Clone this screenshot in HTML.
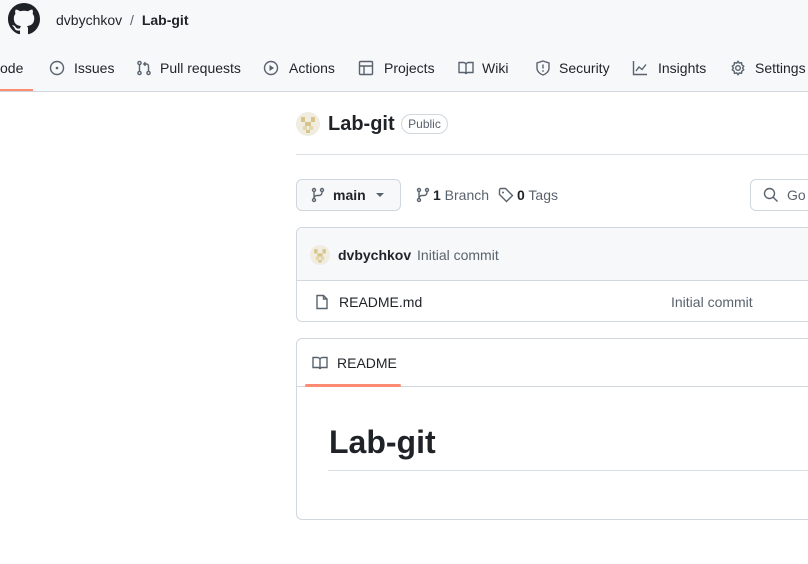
<!DOCTYPE html>
<html><head><meta charset="utf-8"><style>
*{margin:0;padding:0;box-sizing:border-box}
body{width:808px;height:564px;overflow:hidden;background:#fff;font-family:"Liberation Sans",sans-serif;color:#1f2328;position:relative}
.a{position:absolute}
.hdr{left:0;top:0;width:808px;height:92px;background:#f6f8fa;border-bottom:1px solid #d0d7de}
.nav{top:59px;font-size:14px;color:#1f2328;line-height:18px;white-space:nowrap}
svg{display:block}
.ic{stroke:#59636e;fill:none;stroke-width:1.4}
</style></head><body>
<div class="a hdr"></div>
<svg class="a" style="left:8px;top:3px" width="32" height="32" viewBox="0 0 16 16"><path fill="#1f2328" d="M8 0C3.58 0 0 3.58 0 8c0 3.54 2.29 6.53 5.47 7.59.4.07.55-.17.55-.38 0-.19-.01-.82-.01-1.49-2.01.37-2.53-.49-2.69-.94-.09-.23-.48-.94-.82-1.13-.28-.15-.68-.52-.01-.53.63-.01 1.08.58 1.23.82.72 1.21 1.87.87 2.33.66.07-.52.28-.87.51-1.07-1.78-.2-3.64-.89-3.64-3.95 0-.87.31-1.59.82-2.15-.08-.2-.36-1.02.08-2.12 0 0 .67-.21 2.2.82.64-.18 1.32-.27 2-.27.68 0 1.36.09 2 .27 1.53-1.04 2.2-.82 2.2-.82.44 1.1.16 1.92.08 2.12.51.56.82 1.27.82 2.15 0 3.07-1.87 3.75-3.65 3.95.29.25.54.73.54 1.48 0 1.07-.01 1.93-.01 2.2 0 .21.15.46.55.38A8.013 8.013 0 0016 8c0-4.42-3.58-8-8-8z"/></svg>
<div class="a" style="left:56px;top:11px;font-size:14px;line-height:18px;color:#1f2328">dvbychkov <span style="color:#59636e;margin:0 4px">/</span> <b>Lab-git</b></div>

<div class="a nav" style="left:0">ode</div>
<div class="a" style="left:0;top:89px;width:33px;height:2px;background:#fd8c73"></div>
<svg class="a" style="left:49px;top:60px" width="16" height="16"><circle class="ic" cx="8" cy="8" r="6.5"/><circle cx="8" cy="8" r="1.3" fill="#59636e"/></svg>
<div class="a nav" style="left:74px">Issues</div>
<svg class="a" style="left:136px;top:60px" width="16" height="16"><circle class="ic" cx="3.5" cy="3" r="1.6"/><circle class="ic" cx="3.5" cy="13" r="1.6"/><path class="ic" d="M3.5 4.6v6.8M12.5 11.4V6a2 2 0 0 0-2-2H8M9.5 2.3L7.8 4l1.7 1.7"/><circle class="ic" cx="12.5" cy="13" r="1.6"/></svg>
<div class="a nav" style="left:160px">Pull requests</div>
<svg class="a" style="left:263px;top:60px" width="16" height="16"><circle class="ic" cx="8" cy="8" r="6.5"/><path d="M6.5 5v6l4.5-3z" fill="#59636e"/></svg>
<div class="a nav" style="left:289px">Actions</div>
<svg class="a" style="left:358px;top:60px" width="16" height="16"><rect class="ic" x="1.5" y="1.5" width="13" height="13" rx="1"/><path class="ic" d="M1.5 6h13M6 6v8.5"/></svg>
<div class="a nav" style="left:384px">Projects</div>
<svg class="a" style="left:458px;top:60px" width="16" height="16"><path class="ic" d="M1 2.5h4.5A2.5 2.5 0 0 1 8 5v9a2 2 0 0 0-2-1.5H1zM15 2.5h-4.5A2.5 2.5 0 0 0 8 5v9a2 2 0 0 1 2-1.5h5z"/></svg>
<div class="a nav" style="left:482px">Wiki</div>
<svg class="a" style="left:535px;top:60px" width="16" height="16"><path class="ic" d="M8 1l6 2v5c0 3.5-3 6-6 7-3-1-6-3.5-6-7V3z"/><path class="ic" d="M8 4.5v4"/><circle cx="8" cy="11" r=".9" fill="#59636e"/></svg>
<div class="a nav" style="left:559px">Security</div>
<svg class="a" style="left:632px;top:60px" width="16" height="16"><path class="ic" d="M1.5 1v13.5H15M4 11l3-4 3 2.5 4-5"/></svg>
<div class="a nav" style="left:658px">Insights</div>
<svg class="a" style="left:730px;top:60px" width="16" height="16"><circle class="ic" cx="8" cy="8" r="2.3"/><path class="ic" d="M8 1.3l1.3 1.8 2.2-.4.4 2.2 1.8 1.3-1.1 1.8 1.1 1.8-1.8 1.3-.4 2.2-2.2-.4L8 14.7l-1.3-1.8-2.2.4-.4-2.2L2.3 9.8 3.4 8 2.3 6.2l1.8-1.3.4-2.2 2.2.4z"/></svg>
<div class="a nav" style="left:755px">Settings</div>

<svg class="a" style="left:296px;top:112px" width="24" height="24" viewBox="0 0 24 24"><circle cx="12" cy="12" r="12" fill="#f0ece0"/><rect x="5" y="5" width="4" height="5" fill="#d7c48a"/><rect x="15" y="5" width="4" height="5" fill="#d7c48a"/><rect x="9" y="10" width="6" height="4" fill="#d7c48a"/><rect x="7" y="14" width="4" height="4" fill="#e3d7ae"/><rect x="13" y="14" width="4" height="4" fill="#e3d7ae"/><rect x="10" y="18" width="4" height="3" fill="#d7c48a"/></svg>
<div class="a" style="left:328px;top:112px;font-size:20px;font-weight:bold;line-height:24px">Lab-git</div>
<div class="a" style="left:401px;top:114px;width:47px;height:20px;border:1px solid #d0d7de;border-radius:10px;font-size:12px;line-height:18px;text-align:center;color:#59636e">Public</div>
<div class="a" style="left:296px;top:154px;width:512px;height:1px;background:#d8dee4"></div>

<div class="a" style="left:296px;top:179px;width:105px;height:32px;border:1px solid #d0d7de;border-radius:6px;background:#f6f8fa"></div>
<svg class="a" style="left:310px;top:187px" width="16" height="16"><circle class="ic" cx="4" cy="3" r="1.5"/><circle class="ic" cx="12" cy="3" r="1.5"/><circle class="ic" cx="4" cy="13" r="1.5"/><path class="ic" d="M4 4.5v7M12 4.5v1A3 3 0 0 1 9 8.5H7A3 3 0 0 0 4 11.5"/></svg>
<div class="a" style="left:333px;top:186px;font-size:14px;font-weight:bold;line-height:18px">main</div>
<svg class="a" style="left:375px;top:192px" width="10" height="6"><path d="M1 1h8L5 5z" fill="#59636e"/></svg>
<svg class="a" style="left:415px;top:187px" width="16" height="16"><circle class="ic" cx="4" cy="3" r="1.5"/><circle class="ic" cx="12" cy="3" r="1.5"/><circle class="ic" cx="4" cy="13" r="1.5"/><path class="ic" d="M4 4.5v7M12 4.5v1A3 3 0 0 1 9 8.5H7A3 3 0 0 0 4 11.5"/></svg>
<div class="a" style="left:433px;top:186px;font-size:14px;line-height:18px;color:#59636e"><b style="color:#1f2328">1</b> Branch</div>
<svg class="a" style="left:498px;top:187px" width="16" height="16"><path class="ic" d="M1.5 2.5v5l7 7 6-6-7-7h-5z"/><circle cx="5" cy="5.5" r="1" fill="#59636e"/></svg>
<div class="a" style="left:517px;top:186px;font-size:14px;line-height:18px;color:#59636e"><b style="color:#1f2328">0</b> Tags</div>
<div class="a" style="left:750px;top:179px;width:80px;height:32px;border:1px solid #d0d7de;border-radius:6px;background:#fff"></div>
<svg class="a" style="left:763px;top:187px" width="16" height="16"><circle class="ic" cx="6.5" cy="6.5" r="5"/><path class="ic" d="M10.2 10.2L14.5 14.5"/></svg>
<div class="a" style="left:787px;top:186px;font-size:14px;line-height:18px;color:#59636e">Go</div>

<div class="a" style="left:296px;top:227px;width:530px;height:95px;border:1px solid #d0d7de;border-radius:6px;overflow:hidden">
 <div style="height:53px;background:#f6f8fa;border-bottom:1px solid #d0d7de"></div>
</div>
<svg class="a" style="left:310px;top:245px" width="20" height="20" viewBox="0 0 24 24"><circle cx="12" cy="12" r="12" fill="#f0ece0"/><rect x="5" y="5" width="4" height="5" fill="#d7c48a"/><rect x="15" y="5" width="4" height="5" fill="#d7c48a"/><rect x="9" y="10" width="6" height="4" fill="#d7c48a"/><rect x="7" y="14" width="4" height="4" fill="#e3d7ae"/><rect x="13" y="14" width="4" height="4" fill="#e3d7ae"/><rect x="10" y="18" width="4" height="3" fill="#d7c48a"/></svg>
<div class="a" style="left:338px;top:246px;font-size:14px;line-height:18px"><b>dvbychkov</b> <span style="color:#59636e;margin-left:2px">Initial commit</span></div>
<svg class="a" style="left:314px;top:294px" width="16" height="16"><path class="ic" d="M3 1.5h6.5l3.5 3.5v9.5H3z"/><path class="ic" d="M9.5 1.5V5H13"/></svg>
<div class="a" style="left:339px;top:293px;font-size:14px;line-height:18px">README.md</div>
<div class="a" style="left:671px;top:293px;font-size:14px;line-height:18px;color:#59636e">Initial commit</div>

<div class="a" style="left:296px;top:338px;width:530px;height:182px;border:1px solid #d0d7de;border-radius:6px"></div>
<div class="a" style="left:297px;top:386px;width:511px;height:1px;background:#d0d7de"></div>
<div class="a" style="left:305px;top:384px;width:96px;height:3px;background:#fd8c73;border-radius:2px"></div>
<svg class="a" style="left:312px;top:355px" width="16" height="16"><path class="ic" d="M1 2.5h4.5A2.5 2.5 0 0 1 8 5v9a2 2 0 0 0-2-1.5H1zM15 2.5h-4.5A2.5 2.5 0 0 0 8 5v9a2 2 0 0 1 2-1.5h5z"/></svg>
<div class="a" style="left:337px;top:354px;font-size:14px;line-height:18px">README</div>
<div class="a" style="left:329px;top:422px;font-size:32px;font-weight:bold;line-height:40px">Lab-git</div>
<div class="a" style="left:328px;top:470px;width:480px;height:1px;background:#d8dee4"></div>
</body></html>
